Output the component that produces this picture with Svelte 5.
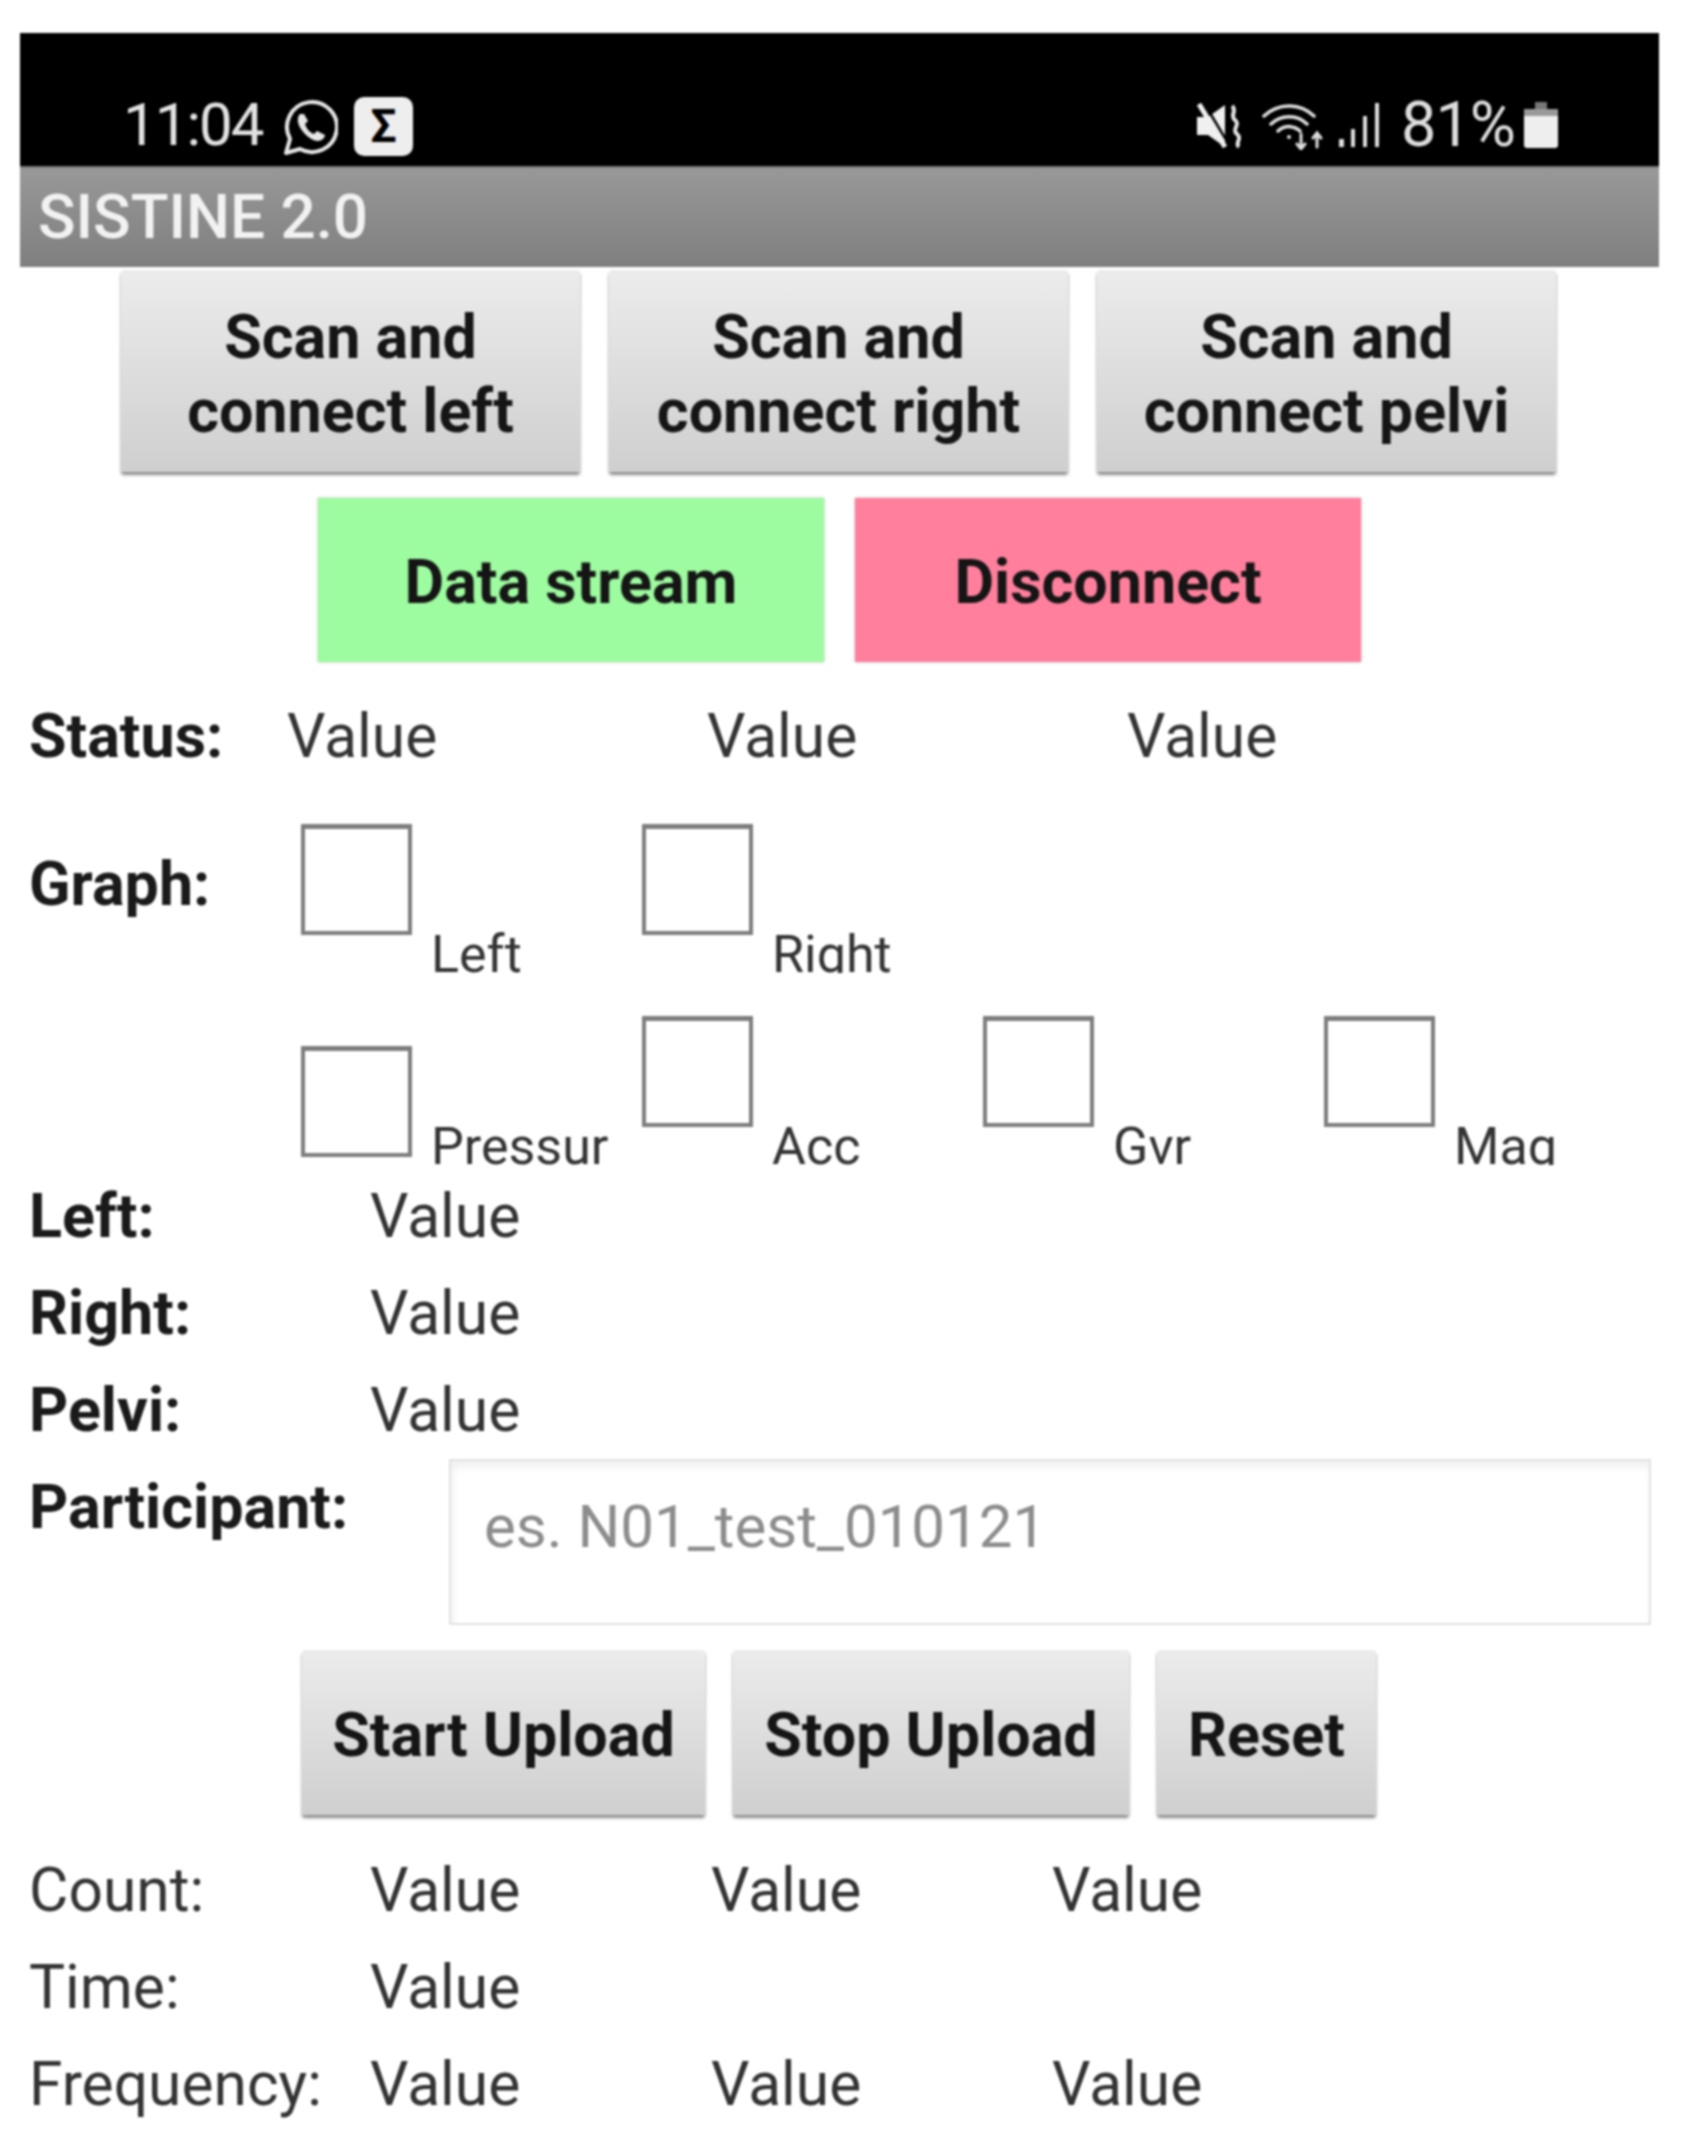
<script>
	const scans = ['left', 'right', 'pelvi'];
	const sensors = ['Pressur', 'Acc', 'Gvr', 'Mag'];
	const channels = ['Left', 'Right', 'Pelvi'];
</script>

<div class="screen">
	<div class="statusbar">
		<span class="time">11:04</span>
		<svg class="whatsapp" viewBox="0 0 56 58" fill="none" stroke="#e6e6e6">
			<path d="M4 55l4-14A25 25 0 1 1 18 51z" stroke-width="4" stroke-linejoin="round" />
			<path d="M18 16c-3 3-3 9 1 15s11 12 17 12c3 0 7-3 7-6l-8-4-3 3c-4-1-8-6-9-10l3-3-4-7z" fill="#e6e6e6" stroke="none" />
		</svg>
		<span class="sigma">Σ</span>
		<span class="spacer"></span>
		<svg class="mute" viewBox="0 0 46 46" fill="none">
			<path d="M0 14h11L28 2v42L11 32H0z" fill="#f0f0f0" />
			<path d="M7 0l24 40" stroke="#000" stroke-width="2.5" />
			<path d="M2 1l26 43" stroke="#f0f0f0" stroke-width="5" />
			<path d="M35 3c6 5-3 9 3 14s-4 9 2 14-3 9 2 13" stroke="#e6e6e6" stroke-width="4" />
		</svg>
		<svg class="wifi" viewBox="0 0 65 50" fill="none" stroke="#ddd" stroke-width="3.5" stroke-linecap="round">
			<path d="M2 16a36 36 0 0 1 50 0" />
			<path d="M9 24a26 26 0 0 1 36 0" />
			<path d="M16 31a16 16 0 0 1 22 0" />
			<circle cx="27" cy="37" r="2" fill="#ddd" stroke="none" />
			<path d="M39 34v14M35 44l4 5 4-5" stroke-width="3" />
			<path d="M55 47V34M51 38l4-5 4 5" stroke-width="3" />
		</svg>
		<svg class="signal" viewBox="0 0 44 44" fill="#ddd">
			<rect x="1" y="36" width="5" height="8" />
			<rect x="13" y="26" width="4" height="18" />
			<rect x="25" y="13" width="4" height="31" />
			<rect x="37" y="0" width="4" height="44" />
		</svg>
		<span class="percent">81%</span>
		<svg class="battery" viewBox="0 0 34 46">
			<path d="M11 0h12v7H11z" fill="#777" />
			<path d="M3 7h28q3 0 3 3v33q0 3-3 3H3q-3 0-3-3V10q0-3 3-3z" fill="#eee" />
			<rect x="0" y="7" width="34" height="7" fill="#999" />
		</svg>
	</div>
	<div class="appbar">SISTINE 2.0</div>

	<div class="row scan-row">
		{#each scans as side}
			<button class="btn scan">Scan and<br />connect {side}</button>
		{/each}
	</div>

	<div class="row action-row">
		<button class="flat green">Data stream</button>
		<button class="flat pink">Disconnect</button>
	</div>

	<div class="status">
		<b>Status:</b><span>Value</span><span>Value</span><span>Value</span>
	</div>

	<div class="checks first">
		<b class="graph">Graph:</b>
		<div class="check"><i></i><label>Left</label></div>
		<div class="check"><i></i><label>Right</label></div>
	</div>
	<div class="checks second">
		{#each sensors as name, n}
			<div class="check" class:low={n === 0}><i></i><label>{name}</label></div>
		{/each}
	</div>

	<div class="values strong">
		{#each channels as name}
			<b>{name}:</b><span>Value</span><span></span><span></span>
		{/each}
	</div>

	<div class="participant">
		<b>Participant:</b>
		<input type="text" placeholder="es. N01_test_010121" />
	</div>

	<div class="row upload-row">
		<button class="btn start">Start Upload</button>
		<button class="btn stop">Stop Upload</button>
		<button class="btn reset">Reset</button>
	</div>

	<div class="values stats">
		<span>Count:</span><span>Value</span><span>Value</span><span>Value</span>
		<span>Time:</span><span>Value</span><span></span><span></span>
		<span>Frequency:</span><span>Value</span><span>Value</span><span>Value</span>
	</div>
</div>

<style>
	:global(body) {
		background: #fff;
	}
	.screen {
		width: 1639px;
		margin-left: 20px;
		padding-top: 33px;
		font-family: Roboto, 'Liberation Sans', sans-serif;
		font-size: 60.5px;
		color: #333;
		filter: blur(1px);
	}
	.statusbar {
		height: 133px;
		background: #000;
		display: flex;
		align-items: flex-start;
		color: #e2e2e2;
		box-sizing: border-box;
		padding: 60px 101px 0 103px;
	}
	.statusbar svg {
		flex: none;
	}
	.time {
		font-size: 60px;
		line-height: 64px;
		letter-spacing: -2px;
		width: 159px;
	}
	.whatsapp {
		width: 56px;
		height: 58px;
		margin-top: 5px;
	}
	.sigma {
		width: 59px;
		height: 59px;
		margin: 4px 0 0 16px;
		background: #eee;
		border-radius: 10px;
		color: #000;
		font-size: 46px;
		font-weight: 700;
		line-height: 59px;
		text-align: center;
	}
	.spacer {
		flex: 1;
	}
	.mute {
		width: 46px;
		height: 46px;
		margin-top: 10px;
	}
	.wifi {
		width: 65px;
		height: 50px;
		margin: 7px 0 0 19px;
	}
	.signal {
		width: 44px;
		height: 44px;
		margin: 10px 0 0 11px;
	}
	.percent {
		font-size: 63px;
		line-height: 64px;
		margin-left: 19px;
		letter-spacing: -1px;
		color: #ddd;
		width: 123px;
	}
	.battery {
		width: 34px;
		height: 46px;
		margin-top: 9px;
	}
	.appbar {
		height: 101px;
		box-sizing: border-box;
		padding-left: 18px;
		background: linear-gradient(#989898, #7f7f7f);
		border-top: 2px solid #777;
		color: #f2f2f2;
		font-size: 62px;
		font-weight: 500;
		line-height: 98px;
	}
	.row {
		display: flex;
	}
	button {
		font-family: inherit;
		font-size: 61px;
		font-weight: 700;
		color: #151515;
		border: 0;
		padding: 0;
	}
	.btn {
		background: linear-gradient(#ececec, #cfcfcf);
		box-shadow: 0 3px 3px #8c8c8c;
		border-radius: 3px;
		line-height: 74px;
	}
	.scan-row {
		margin-top: 3px;
		padding-left: 101px;
		gap: 29px;
	}
	.scan {
		width: 459px;
		height: 202px;
		padding-top: 6px;
	}
	.action-row {
		margin-top: 26px;
		padding-left: 298px;
		gap: 31px;
	}
	.flat {
		width: 506px;
		height: 164px;
		padding-top: 3px;
		box-shadow: 0 0 3px #bbb;
	}
	.green {
		background: #9dfc9f;
	}
	.pink {
		background: #ff7f9c;
	}
	.status,
	.values {
		display: grid;
		padding-left: 9px;
		line-height: 97px;
	}
	.status {
		grid-template-columns: 258px 420px 420px 420px;
		margin-top: 26px;
	}
	b {
		color: #1a1a1a;
		font-size: 61px;
	}
	.checks {
		display: flex;
		height: 151px;
	}
	.first {
		margin-top: 37px;
		padding-left: 9px;
	}
	.graph {
		width: 272px;
		flex: none;
		line-height: 80px;
		margin-top: 22px;
	}
	.second {
		margin-top: 41px;
		padding-left: 281px;
	}
	.check {
		flex: none;
		width: 341px;
		display: flex;
		align-items: flex-end;
	}
	.check i {
		align-self: flex-start;
		flex: none;
		width: 111px;
		height: 111px;
		box-sizing: border-box;
		border: 4px solid #7d7d7d;
		border-top-width: 5px;
		margin-top: 2px;
	}
	.low i {
		margin-top: 32px;
	}
	.check label {
		height: 48px;
		margin-left: 19px;
		overflow: hidden;
		font-size: 52px;
		line-height: 60px;
		white-space: nowrap;
	}
	.values {
		grid-template-columns: 341px 341px 341px 341px;
		grid-auto-rows: 97px;
	}
	.strong {
		margin-top: 3px;
	}
	.participant {
		display: flex;
		height: 166px;
		padding-left: 9px;
		line-height: 96px;
	}
	.participant b {
		width: 420px;
	}
	.participant input {
		width: 1202px;
		height: 166px;
		box-sizing: border-box;
		padding: 0 33px 31px;
		border: 2px solid #e2e2e2;
		box-shadow: inset 2px 6px 8px #f0f0f0;
		outline: none;
		font: inherit;
		font-size: 60px;
	}
	.participant input::placeholder {
		color: #8c8c8c;
		opacity: 1;
	}
	.upload-row {
		margin-top: 25px;
		padding-left: 282px;
		gap: 28px;
	}
	.upload-row .btn {
		height: 165px;
		padding-top: 4px;
	}
	.start {
		width: 403px;
	}
	.stop {
		width: 396px;
	}
	.reset {
		width: 219px;
	}
	.stats {
		margin-top: 27px;
	}
</style>
